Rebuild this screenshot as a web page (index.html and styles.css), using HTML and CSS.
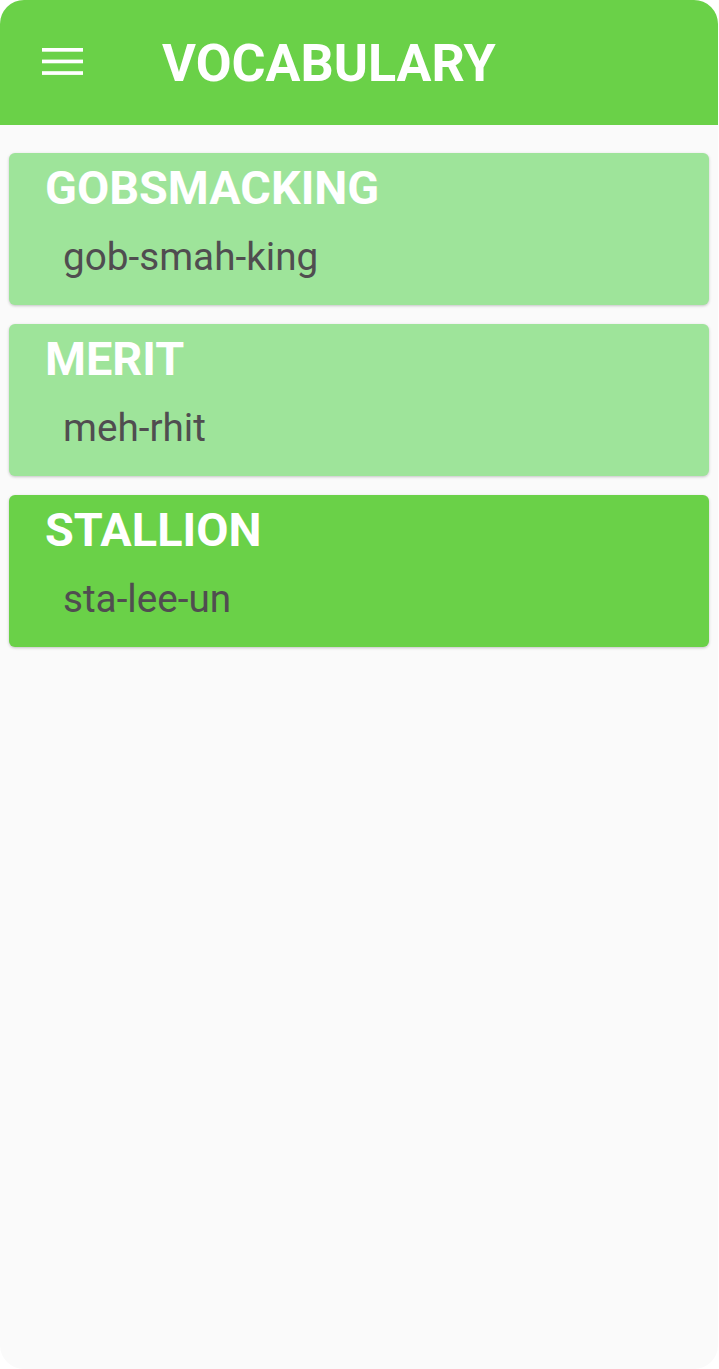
FILE: index.html
```html
<!DOCTYPE html>
<html>
<head>
<meta charset="utf-8">
<link rel="stylesheet" href="styles.css">
</head>
<body>
<div class="frame">
  <header class="appbar">
    <div class="menu">
      <svg width="41" height="27" viewBox="0 0 41 27"><rect x="0" y="0" width="41" height="3.7" fill="#fff"/><rect x="0" y="11.6" width="41" height="3.7" fill="#fff"/><rect x="0" y="23.2" width="41" height="3.7" fill="#fff"/></svg>
    </div>
    <h1 class="title">VOCABULARY</h1>
  </header>
  <main class="list">
    <div class="card light">
      <div class="word">GOBSMACKING</div>
      <div class="pron">gob-smah-king</div>
    </div>
    <div class="card light">
      <div class="word">MERIT</div>
      <div class="pron">meh-rhit</div>
    </div>
    <div class="card dark">
      <div class="word">STALLION</div>
      <div class="pron">sta-lee-un</div>
    </div>
  </main>
</div>
</body>
</html>
```
FILE: styles.css
```css
html, body { margin: 0; padding: 0; background: #ffffff; }
body { font-family: Roboto, "Noto Sans", sans-serif; }
.frame {
  width: 718px;
  height: 1369px;
  background: #fafafa;
  border-radius: 24px;
  overflow: hidden;
}
.appbar {
  height: 125px;
  background: #6ad148;
  display: flex;
  align-items: center;
}
.menu {
  width: 41px;
  height: 27px;
  margin-left: 42px;
  margin-top: -2px;
  display: flex;
}
.title {
  margin: 0 0 0 79px;
  color: #fff;
  font-weight: 700;
  font-size: 52px;
  line-height: 1;
  margin-top: 2px;
}
.list {
  padding: 28px 9px 0 9px;
  display: flex;
  flex-direction: column;
  gap: 19px;
}
.card {
  height: 152px;
  border-radius: 6px;
  box-shadow: 0 1px 3px rgba(0,0,0,0.22);
  box-sizing: border-box;
  padding: 8px 0 0 36px;
}
.card.light { background: #9ee49a; }
.card.dark { background: #6ad148; }
.word {
  color: #fff;
  font-weight: 700;
  font-size: 46.8px;
  line-height: 54px;
}
.pron {
  color: #504d50;
  font-size: 38.7px;
  line-height: 46px;
  margin-top: 19px;
  padding-left: 18px;
}
```
